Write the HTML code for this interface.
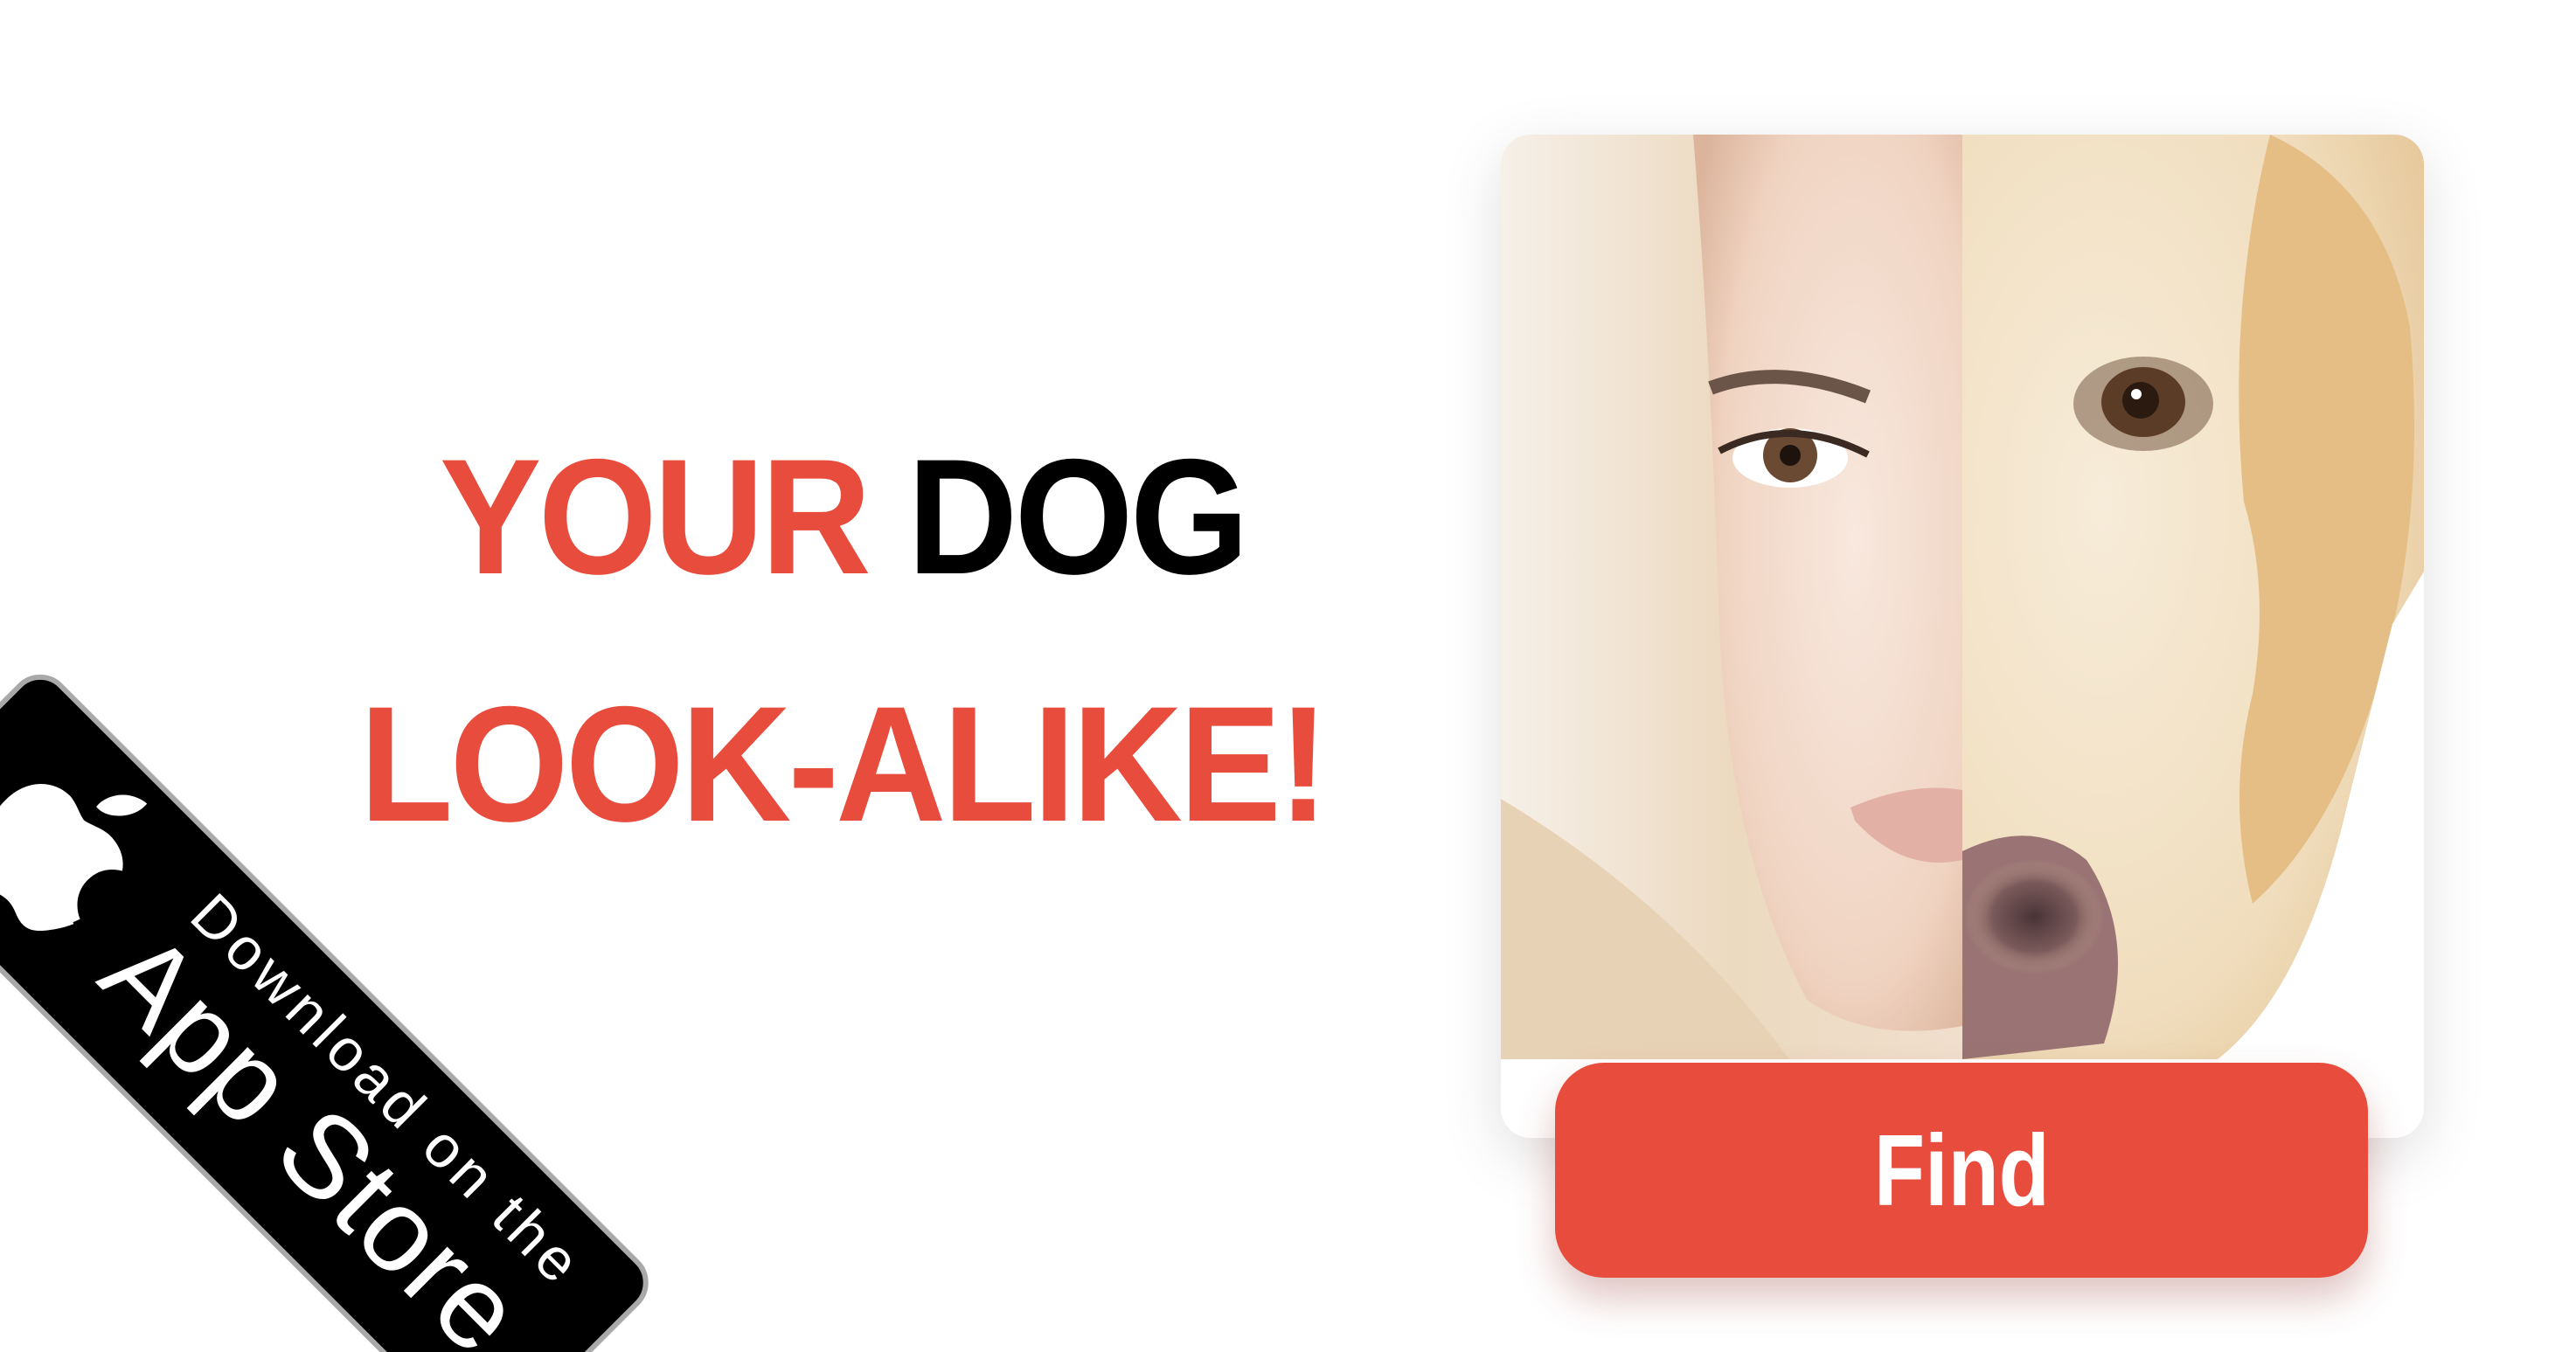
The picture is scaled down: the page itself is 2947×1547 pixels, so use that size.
<!DOCTYPE html>
<html><head><meta charset="utf-8">
<style>
html,body{margin:0;padding:0;background:#fff;width:2947px;height:1547px;overflow:hidden;}
body{position:relative;font-family:"Liberation Sans",sans-serif;}
.wrap{position:absolute;left:0;top:0;width:2947px;height:1547px;overflow:hidden;clip-path:inset(0 0 0 0);}
.h{position:absolute;left:0;width:1928px;text-align:center;font-weight:bold;font-size:188px;letter-spacing:-4px;line-height:1;white-space:nowrap;transform:scaleX(0.93);transform-origin:964px 0;}
.red{color:#E84C3D}
.card{position:absolute;left:1717px;top:154px;width:1056px;height:1148px;border-radius:34px;background:#fff;box-shadow:0 20px 70px rgba(0,0,0,0.13);overflow:hidden;}
.btn{position:absolute;left:1779px;top:1216px;width:930px;height:246px;border-radius:56px;background:#E84C3D;box-shadow:0 24px 44px rgba(150,60,50,0.3);color:#fff;font-weight:bold;font-size:116px;text-align:center;line-height:246px;}
.btn span{display:inline-block;transform:scaleX(0.82);}
.badge{position:absolute;left:46px;top:757px;width:1005px;height:284px;transform-origin:0 0;transform:rotate(45deg);background:#000;border:6px solid #a9a9a9;border-radius:36px;box-sizing:border-box;color:#fff;}
</style></head><body><div class="wrap">
<div class="h" style="top:497px"><span class="red">YOUR</span> DOG</div>
<div class="h red" style="top:780px">LOOK-ALIKE!</div>

<div class="card">
<svg width="1056" height="1148" viewBox="0 0 1056 1148">
<defs>
<linearGradient id="hair" x1="0" x2="1" y1="0" y2="0"><stop offset="0" stop-color="#f6f0e8"/><stop offset="0.5" stop-color="#ecd9c0"/><stop offset="1" stop-color="#f1dfcd"/></linearGradient>
<radialGradient id="skin" cx="0.6" cy="0.45" r="0.7"><stop offset="0" stop-color="#f8e8de"/><stop offset="0.7" stop-color="#f0d4c2"/><stop offset="1" stop-color="#dcb49c"/></radialGradient>
<radialGradient id="dog" cx="0.3" cy="0.4" r="0.8"><stop offset="0" stop-color="#f7ecd9"/><stop offset="0.7" stop-color="#f0ddbd"/><stop offset="1" stop-color="#e6c89a"/></radialGradient>
<radialGradient id="nose" cx="0.5" cy="0.5" r="0.5"><stop offset="0" stop-color="#4a3436"/><stop offset="0.6" stop-color="#7a5a5a"/><stop offset="1" stop-color="#b89a8a" stop-opacity="0"/></radialGradient>
</defs>
<rect x="0" y="0" width="528" height="1058" fill="url(#hair)"/>
<path d="M220 0 L528 0 L528 1020 Q420 1040 350 990 Q260 820 250 560 Q240 250 220 0Z" fill="url(#skin)"/>
<path d="M0 760 Q200 880 330 1058 L0 1058Z" fill="#e8d2b6"/>
<path d="M240 290 Q320 260 420 300" stroke="#6b5448" stroke-width="16" fill="none"/>
<ellipse cx="331" cy="370" rx="66" ry="34" fill="#fff"/>
<circle cx="331" cy="367" r="31" fill="#6b4a34"/>
<circle cx="331" cy="367" r="12" fill="#1d120c"/>
<path d="M250 362 Q330 320 420 366" stroke="#3a2a22" stroke-width="8" fill="none"/>
<path d="M400 770 Q470 740 528 750 L528 830 Q460 845 405 785Z" fill="#e2b0a4"/>
<rect x="528" y="0" width="528" height="1058" fill="url(#dog)"/>
<path d="M880 0 Q1010 60 1040 220 Q1060 450 1000 640 Q950 800 860 880 Q830 760 860 640 Q880 520 850 420 Q830 200 880 0Z" fill="#e5be86"/>
<path d="M1020 560 L1056 500 L1056 1058 L820 1058 Q920 980 970 760Z" fill="#fff"/>
<ellipse cx="735" cy="308" rx="80" ry="54" fill="#6a4c38" opacity="0.5"/>
<ellipse cx="735" cy="306" rx="48" ry="40" fill="#5b3c26"/>
<circle cx="732" cy="304" r="21" fill="#2a1a10"/>
<circle cx="727" cy="297" r="6" fill="#fff"/>
<path d="M528 820 Q610 780 670 830 Q730 920 690 1040 L528 1058Z" fill="#9a7474"/>
<ellipse cx="610" cy="895" rx="80" ry="66" fill="url(#nose)"/>
</svg>
</div>
<div class="btn"><span>Find</span></div>

<div class="badge">
<svg style="position:absolute;left:52px;top:22px" width="205" height="205" viewBox="0 0 170 170">
<path fill="#fff" d="M150.4 130.3c-2.4 5.5-5.2 10.6-8.5 15.3-4.5 6.4-8.1 10.8-10.9 13.3-4.3 4-9 6-14 6.1-3.6 0-7.9-1-12.9-3.1-5-2.1-9.6-3.1-13.8-3.1-4.4 0-9.1 1-14.2 3.1-5 2.1-9.1 3.2-12.2 3.3-4.8.2-9.5-1.9-14.2-6.3-3-2.6-6.8-7.1-11.3-13.5-4.8-6.8-8.8-14.7-11.9-23.7-3.3-9.7-5-19.1-5-28.2 0-10.4 2.2-19.4 6.7-26.9 3.5-6 8.2-10.8 14.1-14.3 5.9-3.5 12.2-5.3 19.1-5.4 3.8 0 8.7 1.2 14.8 3.5 6.1 2.3 10 3.4 11.7 3.4 1.3 0 5.6-1.3 12.9-4 6.9-2.5 12.7-3.5 17.5-3.1 12.9 1 22.6 6.1 29.1 15.4-11.5 7-17.2 16.8-17.1 29.4.1 9.8 3.7 17.9 10.6 24.4 3.1 3 6.6 5.3 10.5 6.9-.8 2.4-1.7 4.7-2.7 6.9zM119 3.4c0 7.7-2.8 14.9-8.4 21.5-6.7 7.9-14.9 12.4-23.7 11.7-.1-.9-.2-1.9-.2-2.9 0-7.4 3.2-15.3 8.9-21.7 2.8-3.3 6.4-6 10.8-8.1 4.4-2.1 8.5-3.3 12.4-3.5.1 1 .2 2 .2 3z"/>
</svg>
<div style="position:absolute;left:321px;top:20px;font-size:68px;letter-spacing:6px;line-height:80px;white-space:nowrap;">Download on the</div>
<div style="position:absolute;left:297px;top:84px;font-size:134px;letter-spacing:2px;line-height:160px;white-space:nowrap;">App Store</div>
</div>
</div></body></html>
